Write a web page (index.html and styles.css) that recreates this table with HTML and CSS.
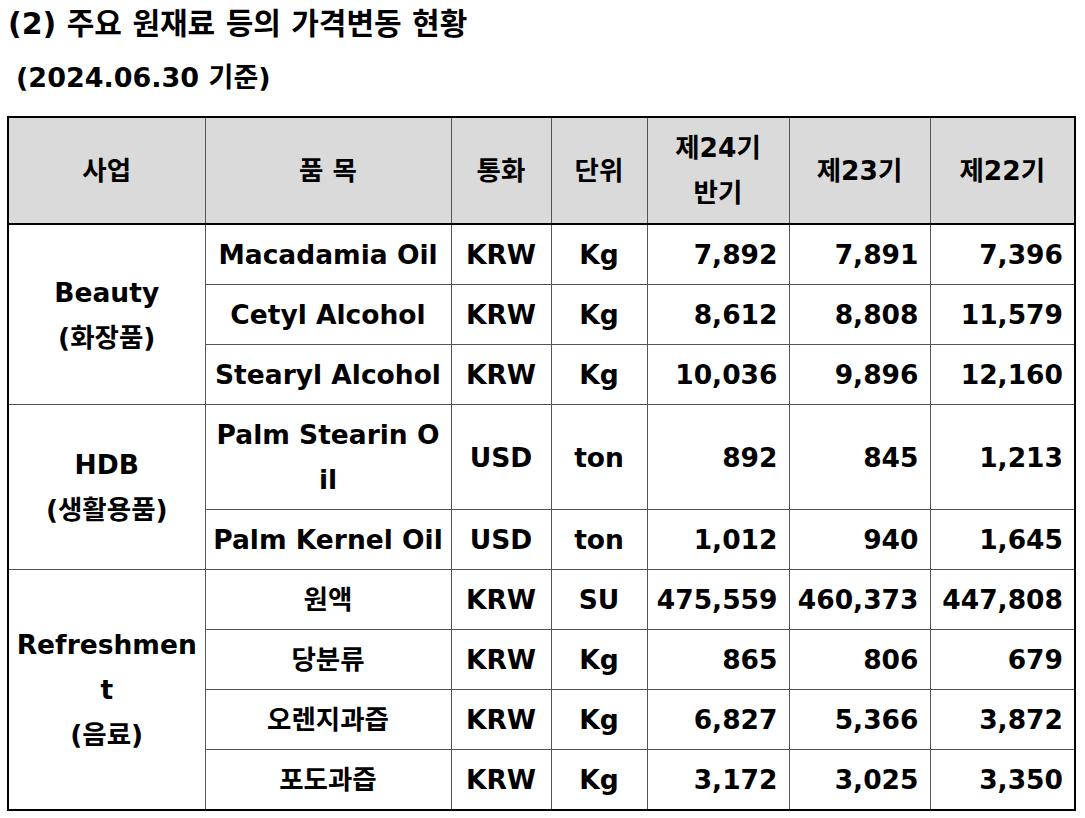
FILE: index.html
```html
<!DOCTYPE html>
<html lang="ko">
<head>
<meta charset="utf-8">
<link rel="stylesheet" href="styles.css">
</head>
<body>
<h2 class="title">(2) 주요 원재료 등의 가격변동 현황</h2>
<p class="date">(2024.06.30 기준)</p>
<table class="price">
  <colgroup>
    <col class="c1"><col class="c2"><col class="c3"><col class="c4"><col class="c5"><col class="c6"><col class="c7">
  </colgroup>
  <thead>
    <tr>
      <th>사업</th>
      <th>품 목</th>
      <th>통화</th>
      <th>단위</th>
      <th>제24기<br>반기</th>
      <th>제23기</th>
      <th>제22기</th>
    </tr>
  </thead>
  <tbody>
    <tr>
      <td rowspan="3" class="biz">Beauty<br>(화장품)</td>
      <td class="item">Macadamia Oil</td><td class="ctr">KRW</td><td class="ctr">Kg</td>
      <td class="num">7,892</td><td class="num">7,891</td><td class="num">7,396</td>
    </tr>
    <tr>
      <td class="item">Cetyl Alcohol</td><td class="ctr">KRW</td><td class="ctr">Kg</td>
      <td class="num">8,612</td><td class="num">8,808</td><td class="num">11,579</td>
    </tr>
    <tr>
      <td class="item">Stearyl Alcohol</td><td class="ctr">KRW</td><td class="ctr">Kg</td>
      <td class="num">10,036</td><td class="num">9,896</td><td class="num">12,160</td>
    </tr>
    <tr>
      <td rowspan="2" class="biz">HDB<br>(생활용품)</td>
      <td class="item">Palm Stearin O<br>il</td><td class="ctr">USD</td><td class="ctr">ton</td>
      <td class="num">892</td><td class="num">845</td><td class="num">1,213</td>
    </tr>
    <tr>
      <td class="item">Palm Kernel Oil</td><td class="ctr">USD</td><td class="ctr">ton</td>
      <td class="num">1,012</td><td class="num">940</td><td class="num">1,645</td>
    </tr>
    <tr>
      <td rowspan="4" class="biz">Refreshmen<br>t<br>(음료)</td>
      <td class="item">원액</td><td class="ctr">KRW</td><td class="ctr">SU</td>
      <td class="num">475,559</td><td class="num">460,373</td><td class="num">447,808</td>
    </tr>
    <tr>
      <td class="item">당분류</td><td class="ctr">KRW</td><td class="ctr">Kg</td>
      <td class="num">865</td><td class="num">806</td><td class="num">679</td>
    </tr>
    <tr>
      <td class="item">오렌지과즙</td><td class="ctr">KRW</td><td class="ctr">Kg</td>
      <td class="num">6,827</td><td class="num">5,366</td><td class="num">3,872</td>
    </tr>
    <tr>
      <td class="item">포도과즙</td><td class="ctr">KRW</td><td class="ctr">Kg</td>
      <td class="num">3,172</td><td class="num">3,025</td><td class="num">3,350</td>
    </tr>
  </tbody>
</table>
</body>
</html>
```

FILE: styles.css
```css
html, body {
  margin: 0;
  padding: 0;
  background: #ffffff;
  color: #000000;
  font-family: "DejaVu Sans", "Noto Sans CJK KR", sans-serif;
  font-weight: bold;
}
.title {
  margin: 0;
  padding: 2px 0 0 8px;
  font-size: 30px;
  line-height: 44px;
  font-weight: bold;
}
.date {
  margin: 10px 0 0 0;
  padding-left: 16px;
  font-size: 27px;
  line-height: 44px;
}
.price {
  margin: 16px 0 0 7px;
  border-collapse: collapse;
  border: 2px solid #000;
  table-layout: fixed;
  width: 1069px;
  font-size: 26.5px;
  line-height: 45px;
}
.c1 { width: 197px; }
.c2 { width: 246px; }
.c3 { width: 100px; }
.c4 { width: 96px; }
.c5 { width: 142px; }
.c6 { width: 141px; }
.c7 { width: 145px; }
.price th, .price td {
  border: 1px solid #555;
  padding: 7px 4px;
  vertical-align: middle;
  white-space: nowrap;
}
.price th {
  background: #dadada;
  text-align: center;
  font-weight: bold;
  padding-top: 7px;
  padding-bottom: 8px;
}
.price thead tr {
  border-bottom: 2px solid #000;
}
.price .biz, .price .item, .price .ctr {
  text-align: center;
}
.price .num {
  text-align: right;
  padding-right: 11px;
}
```
